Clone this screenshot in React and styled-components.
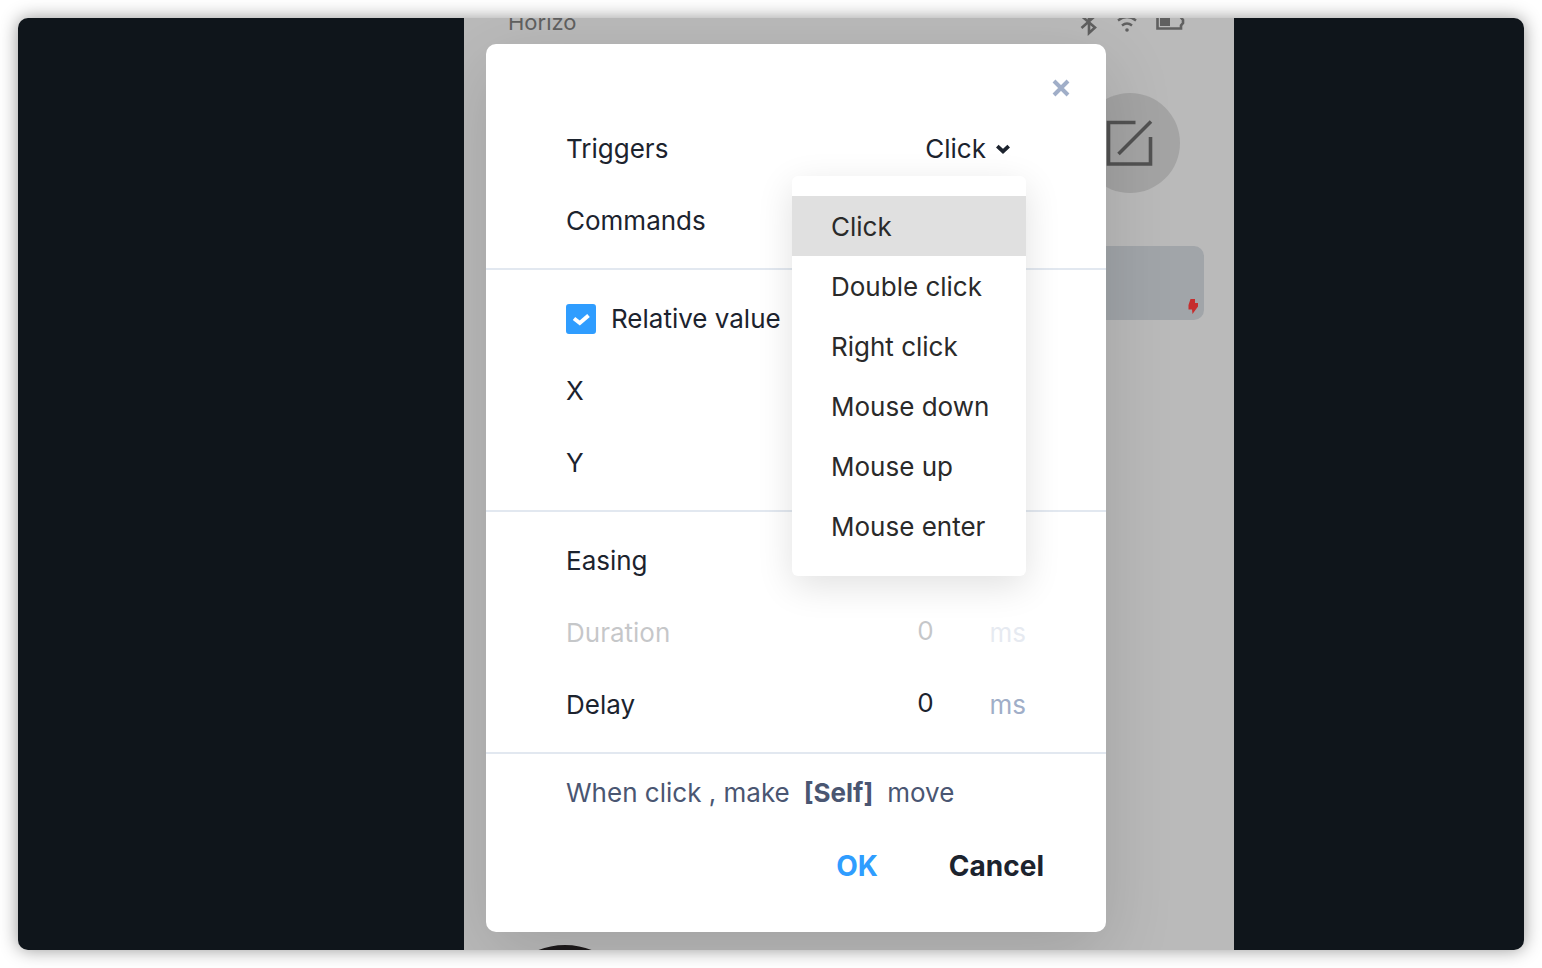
import React, { useState } from "react";
import styled, { createGlobalStyle } from "styled-components";

const GlobalStyle = createGlobalStyle`
  * {
    box-sizing: border-box;
  }

  body {
    background-color: #ffffff;
    color: #1c232e;
    font-family: Inter, "Liberation Sans", sans-serif;
    font-size: 26px;
    line-height: 32px;
    margin: 0;
  }

  button, input, select {
    background: none;
    border: 0;
    color: inherit;
    font: inherit;
    margin: 0;
    outline: 0;
    padding: 0;
  }
`;

const Page = styled.div`
  display: flex;
  min-height: 100vh;
  padding: 18px;
`;

const Workspace = styled.main`
  background-color: #0f151b;
  border-radius: 10px;
  box-shadow: 0 0 18px rgba(0, 0, 0, 0.42);
  display: grid;
  flex: 1;
  grid-template-columns: 446fr 770fr 290fr;
  overflow: hidden;
`;

const Artboard = styled.section`
  background-color: #bababa;
  display: flex;
  flex-direction: column;
  grid-column: 2;
  overflow: hidden;
  position: relative;
`;

const StatusBar = styled.div`
  align-items: center;
  color: #606060;
  display: flex;
  font-size: 22px;
  justify-content: space-between;
  line-height: 28px;
  margin-top: -10px;
  padding: 0 49px 0 44px;
`;

const StatusIcons = styled.div`
  align-items: center;
  display: flex;
  gap: 17px;
`;

const EditCircle = styled.div`
  align-self: flex-end;
  background-color: #a4a4a4;
  border-radius: 50%;
  display: grid;
  height: 100px;
  margin: 57px 54px 0 0;
  place-items: center;
  width: 100px;
`;

const Block = styled.div`
  align-items: flex-end;
  background-color: #a1a5a9;
  border-radius: 10px;
  display: flex;
  height: 74px;
  justify-content: flex-end;
  margin: 53px 30px 0;
  padding: 5px;
`;

const AvatarSlot = styled.div`
  flex: 1;
  min-height: 0;
  padding: 625px 0 0 28px;
`;

const Avatar = styled.div`
  background-color: #1d191a;
  border-radius: 50%;
  height: 146px;
  margin-bottom: -141px;
  width: 146px;
`;

const Dialog = styled.form`
  background-color: #ffffff;
  border-radius: 10px;
  box-shadow: 0 20px 70px rgba(0, 0, 0, 0.14);
  left: 22px;
  max-width: calc(100% - 44px);
  position: absolute;
  top: 26px;
  width: 620px;
`;

const DialogHeader = styled.div`
  display: flex;
  height: 69px;
  justify-content: flex-end;
  padding: 34px 35px 0 0;
`;

const CloseButton = styled.button`
  cursor: pointer;
  display: grid;
  height: 20px;
  place-items: center;
  width: 20px;
`;

const Section = styled.div`
  border-bottom: 2px solid #e2e8f0;
  padding: ${(props) => (props.$first ? "0 80px 11px" : "13px 80px 11px")};
`;

const Row = styled.div`
  align-items: center;
  display: flex;
  height: 72px;
  justify-content: space-between;
  opacity: ${(props) => (props.$disabled ? 0.25 : 1)};
  position: relative;
`;

const CheckLabel = styled.label`
  align-items: center;
  display: flex;
  gap: 15px;
`;

const CheckBox = styled.span`
  display: grid;
  place-items: center;

  & > * {
    grid-area: 1 / 1;
  }

  svg {
    pointer-events: none;
  }
`;

const CheckInput = styled.input`
  appearance: none;
  border: 2px solid #2f9dff;
  border-radius: 3px;
  height: 30px;
  width: 30px;

  &:checked {
    background-color: #2f9dff;
  }
`;

const Picker = styled.div`
  align-items: center;
  display: flex;
  gap: 10px;
  padding-right: 16px;
`;

const PickerSelect = styled.select`
  appearance: none;
  field-sizing: content;
`;

const Menu = styled.ul`
  background-color: #ffffff;
  border-radius: 6px;
  box-shadow: 0 10px 36px rgba(0, 0, 0, 0.12);
  list-style: none;
  margin: 0;
  padding: 20px 0;
  position: absolute;
  right: 0;
  top: 63px;
  width: 234px;
  z-index: 2;
`;

const MenuItem = styled.button`
  background-color: ${(props) => (props.$active ? "#e0e0e0" : "transparent")};
  color: #2a2a2a;
  cursor: pointer;
  height: 60px;
  padding: 2px 0 0 39px;
  text-align: left;
  width: 100%;
`;

const Field = styled.div`
  align-items: center;
  display: flex;
  gap: 24px;
`;

const NumberInput = styled.input`
  padding-bottom: 4px;
  text-align: center;
  width: 80px;
`;

const Unit = styled.span`
  color: #a0aec8;
`;

const Summary = styled.p`
  align-items: center;
  color: #4a5672;
  display: flex;
  gap: 14px;
  height: 78px;
  margin: 0;
  padding: 0 80px;
`;

const Footer = styled.div`
  align-items: center;
  display: flex;
  font-size: 28px;
  gap: 71px;
  height: 100px;
  justify-content: flex-end;
  padding: 0 62px 32px 0;
`;

const Action = styled.button`
  color: ${(props) => (props.$primary ? "#2f9dff" : "#1c232e")};
  cursor: pointer;
  font-weight: 700;
`;

const TRIGGERS = [
  "Click",
  "Double click",
  "Right click",
  "Mouse down",
  "Mouse up",
  "Mouse enter",
];

const BluetoothIcon = () => (
  <svg width="20" height="28" viewBox="0 0 20 28" fill="none" stroke="currentColor" strokeWidth="2.6">
    <path d="M2.5 8 L16 19.5 L10 25 V3 L16 8 L2.5 20" />
  </svg>
);

const WifiIcon = () => (
  <svg width="22" height="28" viewBox="0 0 22 28" fill="none" stroke="currentColor" strokeWidth="2.4">
    <path d="M2 12.5 Q11 5.5 20 12.5" />
    <path d="M6 17.5 Q11 13.5 16 17.5" />
    <circle cx="11" cy="22" r="1.8" fill="currentColor" stroke="none" />
  </svg>
);

const BatteryIcon = () => (
  <svg width="30" height="28" viewBox="0 0 30 28" fill="none" stroke="currentColor" strokeWidth="2.6">
    <path d="M2.5 6.5 H26 V9.5 L28 12 V15 L26 17.5 V20.5 H2.5 Z" />
    <path d="M5 8 H15 V18 H5 Z" fill="currentColor" stroke="none" />
  </svg>
);

const EditIcon = () => (
  <svg width="48" height="48" viewBox="0 0 48 48" fill="none" stroke="#525252" strokeWidth="3.6">
    <path d="M29.5 3.5 H2.5 V45 H44.5 V18" />
    <path d="M12.5 35 L45 2.5" />
  </svg>
);

const BoltIcon = () => (
  <svg width="12" height="17" viewBox="0 0 12 17">
    <path d="M3.5 1 H8 L8 5 H11 V8.5 L5.5 16 L5 11.5 H1.5 V7 Z" fill="#c62d2d" />
  </svg>
);

const CloseIcon = () => (
  <svg width="20" height="20" viewBox="0 0 20 20" fill="none" stroke="#a0aec8" strokeWidth="4">
    <path d="M3 3 L17 17 M17 3 L3 17" />
  </svg>
);

const ChevronIcon = () => (
  <svg width="14" height="10" viewBox="0 0 14 10" fill="none" stroke="#1c232e" strokeWidth="3.8">
    <path d="M1.3 2.2 L7 7.4 L12.7 2.2" />
  </svg>
);

const CheckIcon = () => (
  <svg width="18" height="14" viewBox="0 0 18 14" fill="none" stroke="#ffffff" strokeWidth="4">
    <path d="M2 6.5 L7.8 11 L16.5 3.5" />
  </svg>
);

const TimeRow = ({ id, label, disabled }) => {
  return (
    <Row $disabled={disabled}>
      <label htmlFor={id}>{label}</label>
      <Field>
        <NumberInput id={id} type="text" defaultValue="0" disabled={disabled} />
        <Unit>ms</Unit>
      </Field>
    </Row>
  );
};

const App = () => {
  const [trigger, setTrigger] = useState("Click");

  return (
    <>
      <GlobalStyle />
      <Page>
        <Workspace>
          <Artboard>
            <StatusBar>
              <span>Horizo</span>
              <StatusIcons>
                <BluetoothIcon />
                <WifiIcon />
                <BatteryIcon />
              </StatusIcons>
            </StatusBar>
            <EditCircle>
              <EditIcon />
            </EditCircle>
            <Block>
              <BoltIcon />
            </Block>
            <AvatarSlot>
              <Avatar />
            </AvatarSlot>

            <Dialog onSubmit={(e) => e.preventDefault()}>
              <DialogHeader>
                <CloseButton type="button" aria-label="Close">
                  <CloseIcon />
                </CloseButton>
              </DialogHeader>

              <Section $first>
                <Row>
                  <label htmlFor="trigger">Triggers</label>
                  <Picker>
                    <PickerSelect
                      id="trigger"
                      value={trigger}
                      onChange={(e) => setTrigger(e.target.value)}
                    >
                      {TRIGGERS.map((t) => (
                        <option key={t}>{t}</option>
                      ))}
                    </PickerSelect>
                    <ChevronIcon />
                  </Picker>
                  <Menu>
                    {TRIGGERS.map((t) => (
                      <li key={t}>
                        <MenuItem
                          type="button"
                          $active={t === trigger}
                          onClick={() => setTrigger(t)}
                        >
                          {t}
                        </MenuItem>
                      </li>
                    ))}
                  </Menu>
                </Row>
                <Row>
                  <span>Commands</span>
                </Row>
              </Section>

              <Section>
                <Row>
                  <CheckLabel>
                    <CheckBox>
                      <CheckInput type="checkbox" defaultChecked />
                      <CheckIcon />
                    </CheckBox>
                    Relative value
                  </CheckLabel>
                </Row>
                <Row>
                  <label htmlFor="x">X</label>
                  <NumberInput id="x" type="text" />
                </Row>
                <Row>
                  <label htmlFor="y">Y</label>
                  <NumberInput id="y" type="text" />
                </Row>
              </Section>

              <Section>
                <Row>
                  <span>Easing</span>
                </Row>
                <TimeRow id="duration" label="Duration" disabled />
                <TimeRow id="delay" label="Delay" />
              </Section>

              <Summary>
                <span>When click , make</span>
                <strong>[Self]</strong>
                <span>move</span>
              </Summary>

              <Footer>
                <Action type="submit" $primary>
                  OK
                </Action>
                <Action type="button">Cancel</Action>
              </Footer>
            </Dialog>
          </Artboard>
        </Workspace>
      </Page>
    </>
  );
};

export default App;
